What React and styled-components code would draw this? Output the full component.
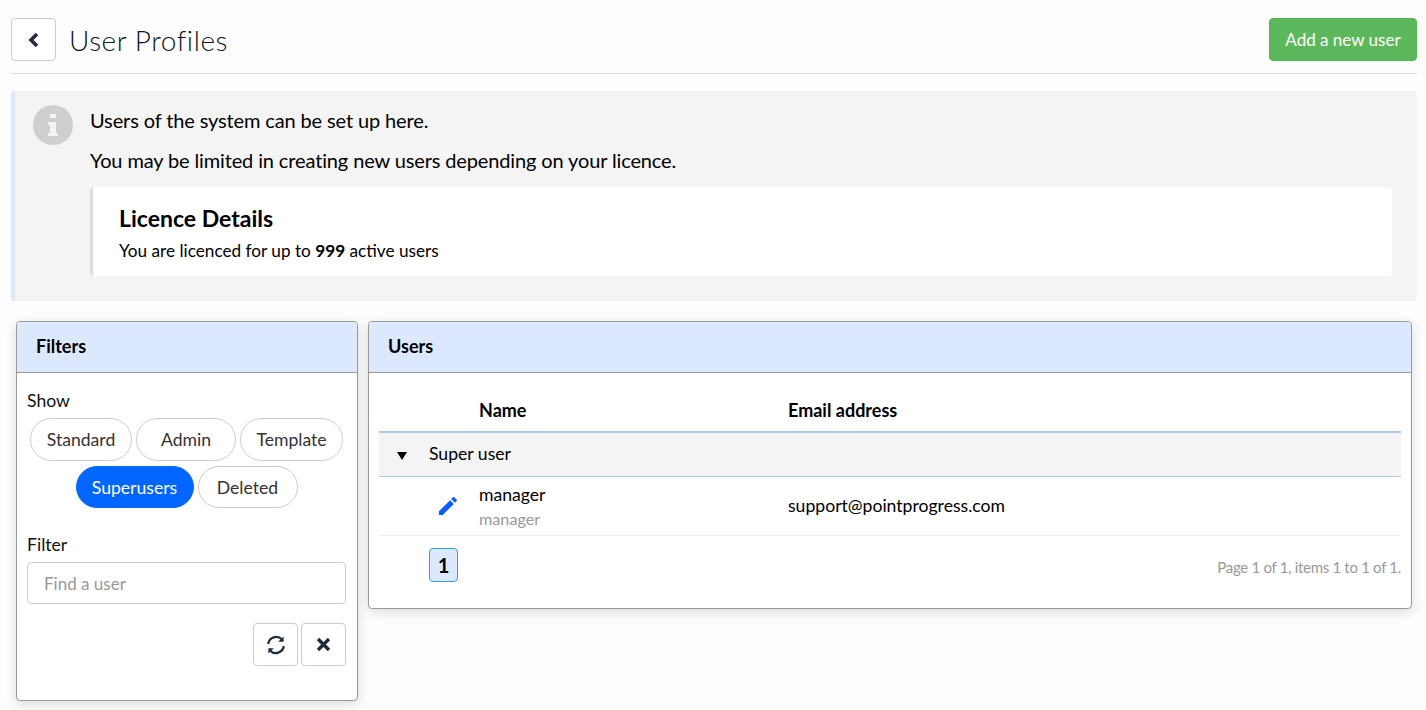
import React from "react";
import styled, { createGlobalStyle } from "styled-components";
import { MdEdit } from "react-icons/md";

const GlobalStyle = createGlobalStyle`
  html, body {
    margin: 0;
    padding: 0;
    background: #fdfdfd;
    color: #000;
    font-family: "Lato", "Liberation Sans", sans-serif;
  }
  * {
    box-sizing: border-box;
  }
`;

const Page = styled.div`
  width: 1426px;
  height: 710px;
  overflow: hidden;
  padding: 18px 9px 0 11px;
`;

const Header = styled.header`
  display: flex;
  align-items: center;
  justify-content: space-between;
  padding-bottom: 12px;
  border-bottom: 1px solid #ddd;
`;

const TitleGroup = styled.div`
  display: flex;
  align-items: center;
  gap: 13px;
`;

const Title = styled.h1`
  margin: 0;
  font-family: "Lato", sans-serif;
  font-weight: 300;
  font-size: 28px;
  letter-spacing: 0.55px;
  color: #0e1620;
`;

const IconButton = styled.button`
  display: flex;
  align-items: center;
  justify-content: center;
  width: 45px;
  height: 43px;
  padding: 0;
  background: #fff;
  border: 1px solid #ccc;
  border-radius: 4px;
  color: #222d3a;
`;

const AddButton = styled.button`
  width: 148px;
  height: 43px;
  padding: 0;
  background: #5cb85c;
  border: 1px solid #4cbb4c;
  border-radius: 4px;
  color: #fff;
  font-family: inherit;
  font-size: 17px;
`;

const InfoBox = styled.section`
  display: flex;
  height: 210px;
  margin-top: 17px;
  padding: 14px 25px 0 18px;
  background: #f4f4f4;
  border-left: 4px solid #dce8fd;
  border-radius: 4px;
`;

const InfoIcon = styled.div`
  flex: none;
  display: flex;
  align-items: center;
  justify-content: center;
  width: 40px;
  height: 40px;
  margin-right: 17px;
  background: #cfcfcf;
  border-radius: 50%;
  color: #f4f4f4;
`;

const InfoBody = styled.div`
  flex: 1;
  padding-top: 3px;
`;

const InfoText = styled.p`
  margin: 0 0 16px;
  font-size: 20px;
  line-height: 24px;
  letter-spacing: -0.13px;
`;

const LicenceCard = styled.div`
  height: 89px;
  margin-top: -1px;
  padding: 17px 26px;
  background: #fff;
  border-left: 3px solid #ddd;
  border-radius: 4px;
`;

const LicenceTitle = styled.h2`
  margin: 0 0 8px;
  font-size: 23px;
  line-height: 28px;
  font-weight: 700;
`;

const LicenceText = styled.p`
  margin: 0;
  font-size: 17.2px;
  line-height: 22px;
`;

const Columns = styled.div`
  display: flex;
  align-items: flex-start;
  gap: 10px;
  margin-top: 20px;
  padding: 0 5px;
`;

const Panel = styled.section`
  flex: ${({ $grow }) => ($grow ? 1 : "none")};
  width: ${({ $width }) => ($width ? `${$width}px` : "auto")};
  height: ${({ $height }) => $height}px;
  background: #fff;
  border: 1px solid #999;
  border-radius: 4px;
  box-shadow: 0 3px 12px rgba(0, 0, 0, 0.14);
  overflow: hidden;
`;

const PanelHeader = styled.div`
  height: 51px;
  padding: 0 19px 2px;
  display: flex;
  align-items: center;
  background: #dce8fd;
  border-bottom: 1px solid #999;
  font-size: 18px;
  font-weight: 700;
`;

const FilterBody = styled.div`
  padding: 17px 11px 0 10px;
`;

const Label = styled.div`
  font-size: 17.6px;
  line-height: 22px;
  color: #111;
`;

const PillWrap = styled.div`
  display: flex;
  flex-wrap: wrap;
  justify-content: center;
  gap: 5px 4px;
  margin-top: 6px;
`;

const Pill = styled.button`
  height: ${({ $short }) => ($short ? 42 : 43)}px;
  width: ${({ $width }) => $width}px;
  padding: 0;
  border: 1px solid ${({ $active }) => ($active ? "#0a6cf0" : "#ccc")};
  border-radius: 22px;
  background: ${({ $active }) => ($active ? "#0066ff" : "#fff")};
  color: ${({ $active }) => ($active ? "#fff" : "#333")};
  font-family: inherit;
  font-size: 17.6px;
`;

const FilterLabel = styled(Label)`
  margin-top: 26px;
`;

const SearchInput = styled.input`
  display: block;
  width: 100%;
  height: 42px;
  margin-top: 6px;
  padding: 0 16px;
  border: 1px solid #ccc;
  border-radius: 4px;
  background: #fff;
  font-family: inherit;
  font-size: 17px;
  &::placeholder {
    color: #999;
    opacity: 1;
  }
`;

const FilterActions = styled.div`
  display: flex;
  justify-content: flex-end;
  gap: 3px;
  margin-top: 19px;
`;

const TableWrap = styled.div`
  padding: 16px 10px 0;
`;

const Grid = styled.div`
  display: grid;
  grid-template-columns: 100px 309px 1fr;
  align-items: center;
`;

const HeadRow = styled(Grid)`
  height: 44px;
  border-bottom: 2px solid #a8cbe0;
  font-size: 18px;
  font-weight: 700;
`;

const GroupRow = styled.div`
  display: flex;
  align-items: center;
  height: 44px;
  padding-bottom: 2px;
  background: #f4f4f4;
  border-bottom: 1px solid #a8cbe0;
  font-size: 17.6px;
`;

const Caret = styled.svg`
  flex: none;
  width: 10px;
  height: 8px;
  margin: 4px 22px 0 18px;
`;

const UserRow = styled(Grid)`
  height: 59px;
  border-bottom: 1px solid #eee;
  font-size: 17.6px;
`;

const EditCell = styled.div`
  display: flex;
  justify-content: flex-end;
  padding-right: 19px;
  color: #0d5cff;
  font-size: 24px;
`;

const UserName = styled.div`
  line-height: 22px;
`;

const UserSub = styled.div`
  margin-top: 3px;
  font-size: 16.2px;
  line-height: 20px;
  color: #999;
`;

const UserEmail = styled.span`
  padding-bottom: 2px;
`;

const Pager = styled.div`
  display: flex;
  align-items: center;
  justify-content: space-between;
  padding: 12px 0 0 50px;
`;

const PageNumber = styled.span`
  display: flex;
  align-items: center;
  justify-content: center;
  width: 29px;
  height: 34px;
  background: #dce8fd;
  border: 1px solid #2f9fe8;
  border-radius: 4px;
  font-size: 20px;
  font-weight: 700;
`;

const PageInfo = styled.span`
  margin-top: 4px;
  font-size: 15px;
  letter-spacing: -0.3px;
  color: #999;
`;

const BackIcon = () => (
  <svg width="12" height="16" viewBox="0 0 12 16">
    <polyline points="9,2 3,8 9,14" fill="none" stroke="currentColor" strokeWidth="3.6" />
  </svg>
);

const InfoGlyph = () => (
  <svg width="12" height="22" viewBox="0 0 12 22" fill="currentColor">
    <rect x="3" y="0" width="6" height="4" />
    <path d="M1 8h8v11h2v3H1v-3h2v-8H1z" />
  </svg>
);

const RefreshIcon = () => (
  <svg width="20" height="20" viewBox="0 0 20 20" fill="none" stroke="currentColor" strokeWidth="2.2">
    <path d="M2.2 9A8 8 0 0 1 16 4.6" />
    <path d="M17.8 11A8 8 0 0 1 4 15.4" />
    <path d="M17.6 1.4v5.4h-5.4z" fill="currentColor" stroke="none" />
    <path d="M2.4 18.6v-5.4h5.4z" fill="currentColor" stroke="none" />
  </svg>
);

const CloseIcon = () => (
  <svg width="15" height="15" viewBox="0 0 15 15">
    <path d="M2 2l11 11M13 2L2 13" fill="none" stroke="currentColor" strokeWidth="3.4" />
  </svg>
);

export default function App() {
  return (
    <>
      <GlobalStyle />
      <Page>
        <Header>
          <TitleGroup>
            <IconButton aria-label="Back">
              <BackIcon />
            </IconButton>
            <Title>User Profiles</Title>
          </TitleGroup>
          <AddButton>Add a new user</AddButton>
        </Header>

        <InfoBox>
          <InfoIcon>
            <InfoGlyph />
          </InfoIcon>
          <InfoBody>
            <InfoText>Users of the system can be set up here.</InfoText>
            <InfoText>You may be limited in creating new users depending on your licence.</InfoText>
            <LicenceCard>
              <LicenceTitle>Licence Details</LicenceTitle>
              <LicenceText>
                You are licenced for up to <b>999</b> active users
              </LicenceText>
            </LicenceCard>
          </InfoBody>
        </InfoBox>

        <Columns>
          <Panel $width={342} $height={380}>
            <PanelHeader>Filters</PanelHeader>
            <FilterBody>
              <Label>Show</Label>
              <PillWrap>
                <Pill $width={102}>Standard</Pill>
                <Pill $width={100}>Admin</Pill>
                <Pill $width={103}>Template</Pill>
                <Pill $width={118} $short $active>Superusers</Pill>
                <Pill $width={100} $short>Deleted</Pill>
              </PillWrap>
              <FilterLabel>Filter</FilterLabel>
              <SearchInput placeholder="Find a user" />
              <FilterActions>
                <IconButton aria-label="Refresh">
                  <RefreshIcon />
                </IconButton>
                <IconButton aria-label="Clear">
                  <CloseIcon />
                </IconButton>
              </FilterActions>
            </FilterBody>
          </Panel>

          <Panel $grow $height={288}>
            <PanelHeader>Users</PanelHeader>
            <TableWrap>
              <HeadRow>
                <span />
                <span>Name</span>
                <span>Email address</span>
              </HeadRow>
              <GroupRow>
                <Caret viewBox="0 0 10 8">
                  <polygon points="0,0 10,0 5,8" fill="#000" />
                </Caret>
                Super user
              </GroupRow>
              <UserRow>
                <EditCell>
                  <MdEdit />
                </EditCell>
                <div>
                  <UserName>manager</UserName>
                  <UserSub>manager</UserSub>
                </div>
                <UserEmail>support@pointprogress.com</UserEmail>
              </UserRow>
              <Pager>
                <PageNumber>1</PageNumber>
                <PageInfo>Page 1 of 1, items 1 to 1 of 1.</PageInfo>
              </Pager>
            </TableWrap>
          </Panel>
        </Columns>
      </Page>
    </>
  );
}
